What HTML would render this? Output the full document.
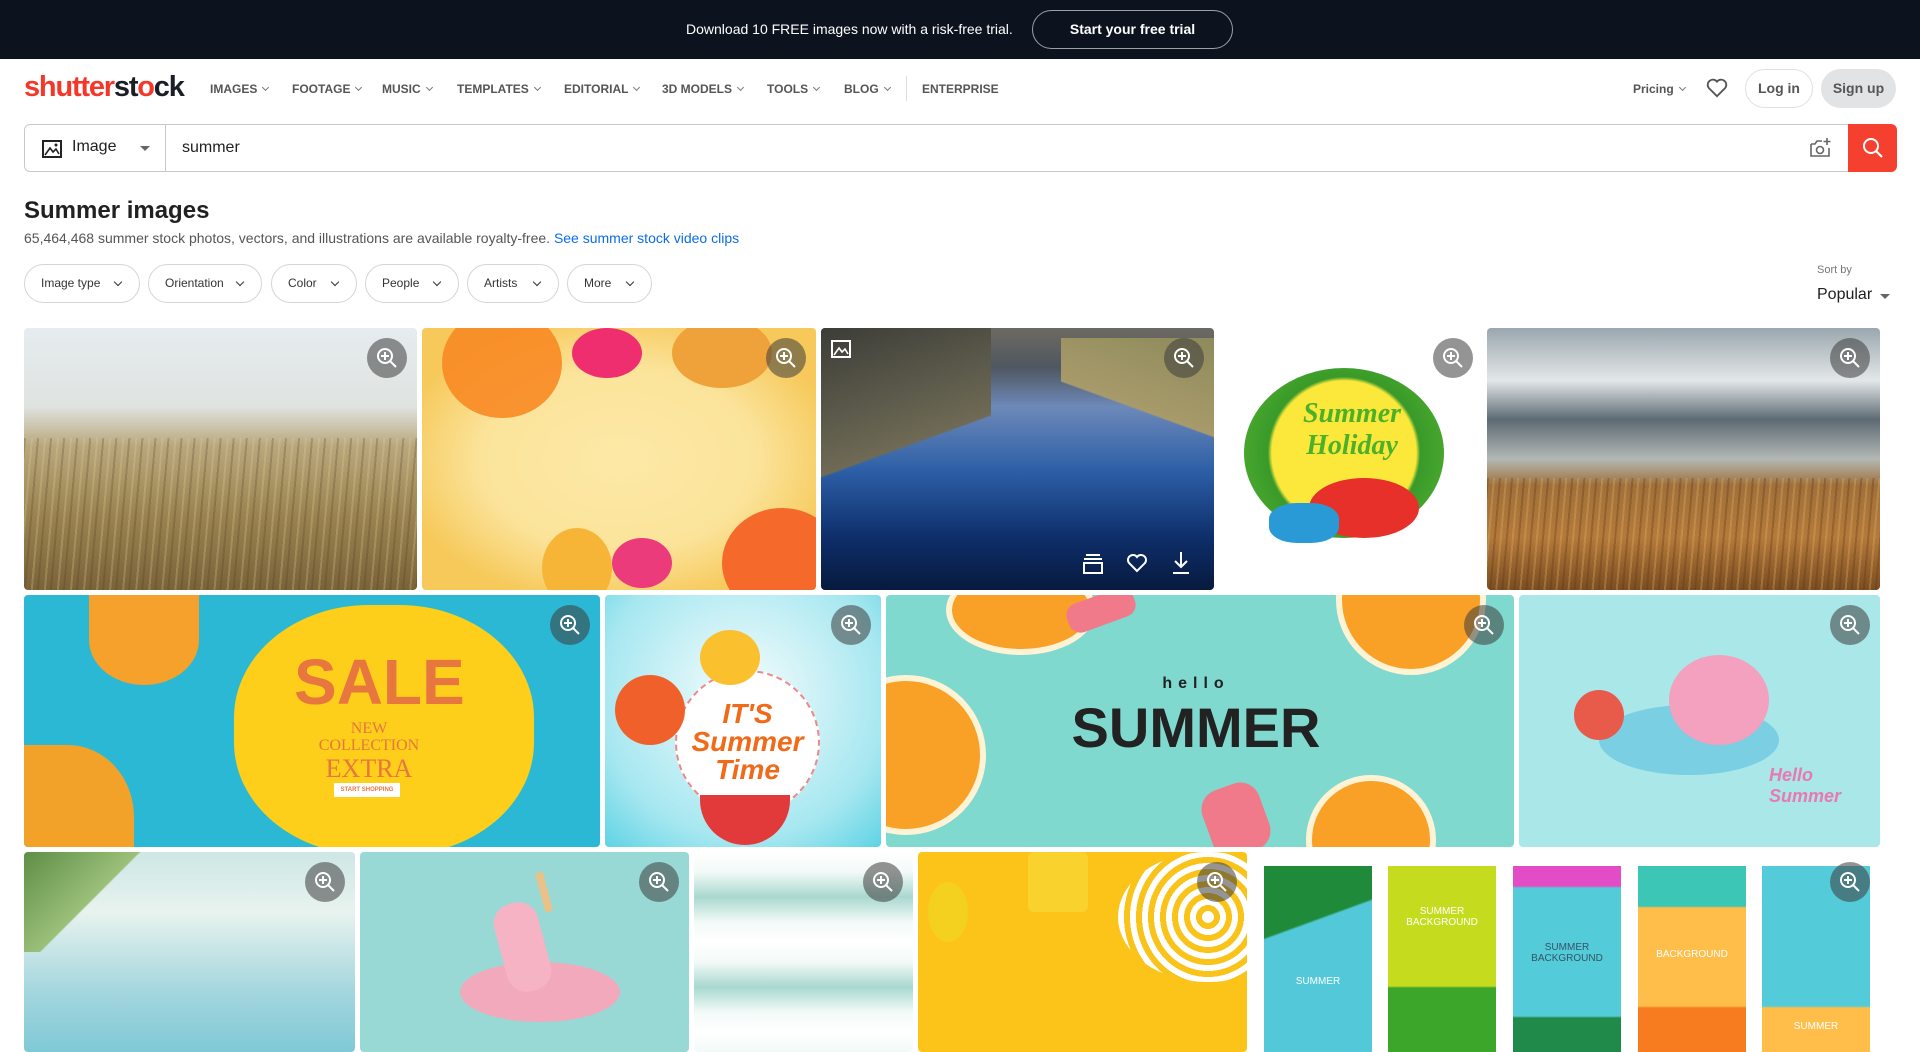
<!DOCTYPE html>
<html><head><meta charset="utf-8"><style>
*{box-sizing:border-box;margin:0;padding:0}
body{width:1920px;height:1040px;overflow:hidden;background:#fff;font-family:"Liberation Sans",sans-serif;color:#212121;position:relative}
.abs{position:absolute}
.top{left:0;top:0;width:1920px;height:59px;background:#0d131e}
.top .t{left:686px;top:21px;color:#fff;font-size:14px}
.top .b{left:1032px;top:10px;width:201px;height:39px;border:1px solid #9aa0a8;border-radius:20px;color:#fff;font-weight:bold;font-size:14px;text-align:center;line-height:37px}
.nav{font-size:12px;font-weight:bold;color:#555;top:82px}
.chev{display:inline-block;width:5px;height:5px;border-right:1.3px solid #777;border-bottom:1.3px solid #777;transform:rotate(45deg);margin-left:6px;position:relative;top:-3px}
.logo{left:24px;top:71px;font-size:29px;font-weight:bold;color:#f5372a;letter-spacing:-1.2px}
.search{left:24px;top:124px;width:1872px;height:48px;border:1px solid #c8c8c8;border-radius:6px}
.img{position:absolute;border-radius:4px;overflow:hidden}
.zm{position:absolute;top:10px;right:10px;width:40px;height:40px;border-radius:50%;background:rgba(60,60,60,.55)}
.zm svg{position:absolute;left:9px;top:9px}
.pill{position:absolute;top:264px;height:39px;border:1px solid #d5d5d5;border-radius:20px;font-size:12px;color:#333;line-height:37px;padding-left:16px}
.pill .chev{position:absolute;right:18px;top:14px;border-color:#333;width:6px;height:6px;border-width:0 1.6px 1.6px 0}
</style></head><body>
<div class="abs top"><div class="abs t">Download 10 FREE images now with a risk-free trial.</div><div class="abs b">Start your free trial</div></div>

<div class="abs logo">shutter<span style="color:#1b1e24">st</span>o<span style="color:#1b1e24">ck</span></div>
<div class="abs nav" style="left:210px">IMAGES<span class="chev"></span></div>
<div class="abs nav" style="left:292px">FOOTAGE<span class="chev"></span></div>
<div class="abs nav" style="left:382px">MUSIC<span class="chev"></span></div>
<div class="abs nav" style="left:457px">TEMPLATES<span class="chev"></span></div>
<div class="abs nav" style="left:564px">EDITORIAL<span class="chev"></span></div>
<div class="abs nav" style="left:662px">3D MODELS<span class="chev"></span></div>
<div class="abs nav" style="left:767px">TOOLS<span class="chev"></span></div>
<div class="abs nav" style="left:844px">BLOG<span class="chev"></span></div>
<div class="abs" style="left:906px;top:76px;width:1px;height:25px;background:#ddd"></div>
<div class="abs nav" style="left:922px">ENTERPRISE</div>
<div class="abs nav" style="left:1633px">Pricing<span class="chev"></span></div>
<svg class="abs" style="left:1706px;top:78px" width="22" height="20" viewBox="0 0 24 22"><path d="M12 20 L3 11 A5 5 0 0 1 12 4 A5 5 0 0 1 21 11 Z" fill="none" stroke="#555" stroke-width="2"/></svg>
<div class="abs" style="left:1745px;top:69px;width:68px;height:39px;border:1px solid #e0e0e0;border-radius:20px;font-size:14px;font-weight:bold;color:#555;text-align:center;line-height:37px">Log in</div>
<div class="abs" style="left:1821px;top:69px;width:75px;height:39px;background:#e2e3e5;border-radius:20px;font-size:14px;font-weight:bold;color:#555;text-align:center;line-height:39px">Sign up</div>

<div class="abs search">
 <svg class="abs" style="left:17px;top:15px" width="20" height="18" viewBox="0 0 20 18"><rect x="1" y="1" width="18" height="16" fill="none" stroke="#222" stroke-width="2"/><path d="M3 15 L8 8 L11 12 L14 9 L17 14" fill="none" stroke="#222" stroke-width="1.6"/><circle cx="14" cy="5" r="1.5" fill="#222"/></svg>
 <div class="abs" style="left:47px;top:13px;font-size:16px">Image</div>
 <div class="abs" style="left:115px;top:21px;border-left:5px solid transparent;border-right:5px solid transparent;border-top:5px solid #666"></div>
 <div class="abs" style="left:140px;top:-1px;width:1px;height:48px;background:#c8c8c8"></div>
 <div class="abs" style="left:157px;top:14px;font-size:16px">summer</div>
 <svg class="abs" style="left:1784px;top:12px" width="22" height="22" viewBox="0 0 22 22"><path d="M2 7 H6 L8 4 H13 M2 7 V19 H20 V11" fill="none" stroke="#666" stroke-width="1.6"/><circle cx="11" cy="13" r="3.5" fill="none" stroke="#666" stroke-width="1.6"/><path d="M18 1 V8 M14.5 4.5 H21.5" stroke="#666" stroke-width="1.6"/></svg>
 <div class="abs" style="left:1823px;top:-1px;width:49px;height:48px;background:#f5402f;border-radius:0 6px 6px 0"><svg style="position:absolute;left:14px;top:13px" width="22" height="22" viewBox="0 0 22 22"><circle cx="9" cy="9" r="7" fill="none" stroke="#fff" stroke-width="2"/><path d="M14 14 L20 20" stroke="#fff" stroke-width="2.2"/></svg></div>
</div>

<div class="abs" style="left:24px;top:197px;font-size:24px;font-weight:bold">Summer images</div>
<div class="abs" style="left:24px;top:230px;font-size:14px;color:#555">65,464,468 summer stock photos, vectors, and illustrations are available royalty-free. <span style="color:#0b6ce8">See summer stock video clips</span></div>

<div class="pill" style="left:24px;width:116px">Image type<span class="chev"></span></div>
<div class="pill" style="left:148px;width:114px">Orientation<span class="chev"></span></div>
<div class="pill" style="left:271px;width:86px">Color<span class="chev"></span></div>
<div class="pill" style="left:365px;width:94px">People<span class="chev"></span></div>
<div class="pill" style="left:467px;width:92px">Artists<span class="chev"></span></div>
<div class="pill" style="left:567px;width:85px">More<span class="chev"></span></div>
<div class="abs" style="left:1817px;top:264px;font-size:11px;color:#777">Sort by</div>
<div class="abs" style="left:1817px;top:286px;font-size:16px">Popular</div>
<div class="abs" style="left:1880px;top:294px;border-left:5px solid transparent;border-right:5px solid transparent;border-top:5px solid #666"></div>

<!-- row 1 -->
<div class="img" style="left:24px;top:328px;width:393px;height:262px;background:linear-gradient(180deg,#e6ecef 0%,#dfe3e0 30%,#b9a77c 45%,#9c8552 70%,#7a6339 100%)"><div class="abs" style="left:0;top:110px;width:393px;height:152px;background:repeating-linear-gradient(95deg,rgba(80,60,30,.25) 0 2px,transparent 2px 7px,rgba(230,210,160,.25) 7px 9px,transparent 9px 13px)"></div><div class="zm"><svg width="22" height="22" viewBox="0 0 22 22"><circle cx="9" cy="9" r="7" fill="none" stroke="#fff" stroke-width="2"/><path d="M14 14L20 20M9 5V13M5 9H13" stroke="#fff" stroke-width="2"/></svg></div></div>
<div class="img" style="left:422px;top:328px;width:394px;height:262px;background:radial-gradient(ellipse at 50% 50%,#fde9a6 0%,#fbe39a 50%,#f6c95a 80%),#fbe39a">
 <div class="abs" style="left:20px;top:-20px;width:120px;height:110px;border-radius:50%;background:#f88a24;opacity:.9"></div>
 <div class="abs" style="left:250px;top:-10px;width:100px;height:70px;border-radius:50%;background:#f0a23a"></div>
 <div class="abs" style="left:300px;top:180px;width:120px;height:110px;border-radius:50%;background:#f56a2a"></div>
 <div class="abs" style="left:120px;top:200px;width:70px;height:80px;border-radius:50%;background:#f6b536"></div>
 <div class="abs" style="left:190px;top:210px;width:60px;height:50px;border-radius:50%;background:#ec3b7a"></div>
 <div class="abs" style="left:150px;top:0px;width:70px;height:50px;border-radius:50%;background:#ef2e6f"></div>
 <div class="zm"><svg width="22" height="22" viewBox="0 0 22 22"><circle cx="9" cy="9" r="7" fill="none" stroke="#fff" stroke-width="2"/><path d="M14 14L20 20M9 5V13M5 9H13" stroke="#fff" stroke-width="2"/></svg></div></div>
<div class="img" style="left:821px;top:328px;width:393px;height:262px;background:linear-gradient(180deg,#6d6a62 0%,#4f5760 15%,#6d89b9 30%,#2c5ea6 55%,#0e2e6a 80%,#071a3e 100%)">
 <div class="abs" style="left:0;top:0;width:170px;height:150px;background:linear-gradient(160deg,#3c3d38,#6e6a55 70%,transparent 71%)"></div>
 <div class="abs" style="left:240px;top:10px;width:160px;height:110px;background:linear-gradient(200deg,#8c8a5b,#a89a6a 60%,transparent 61%)"></div>
 <svg class="abs" style="left:10px;top:12px" width="20" height="18" viewBox="0 0 20 18"><rect x="1" y="1" width="18" height="16" fill="none" stroke="#fff" stroke-width="2"/><path d="M3 15 L8 8 L11 12 L14 9 L17 14" fill="none" stroke="#fff" stroke-width="1.6"/></svg>
 <div class="zm"><svg width="22" height="22" viewBox="0 0 22 22"><circle cx="9" cy="9" r="7" fill="none" stroke="#fff" stroke-width="2"/><path d="M14 14L20 20M9 5V13M5 9H13" stroke="#fff" stroke-width="2"/></svg></div>
 <svg class="abs" style="left:262px;top:222px" width="120" height="26" viewBox="0 0 120 26"><path d="M3 5H17M1 9H19M1 13H19V23H1Z" fill="none" stroke="#fff" stroke-width="2"/><path d="M54 21 L46 13 A4.5 4.5 0 0 1 54 7 A4.5 4.5 0 0 1 62 13 Z" fill="none" stroke="#fff" stroke-width="2"/><path d="M98 2V17M92 11L98 17L104 11M90 23H106" fill="none" stroke="#fff" stroke-width="2"/></svg>
</div>
<div class="img" style="left:1219px;top:328px;width:264px;height:262px;background:#fff">
 <div class="abs" style="left:25px;top:40px;width:200px;height:170px;border-radius:50%;background:radial-gradient(circle,#fbe83a 55%,#3a9a2a 58%,#55b52f 100%)"></div>
 <div class="abs" style="left:58px;top:70px;width:150px;font-family:'Liberation Serif',serif;font-style:italic;font-weight:bold;color:#4cb02a;font-size:28px;text-align:center;line-height:32px">Summer Holiday</div>
 <div class="abs" style="left:90px;top:150px;width:110px;height:60px;border-radius:50%;background:#e8302a"></div>
 <div class="abs" style="left:50px;top:175px;width:70px;height:40px;border-radius:40%;background:#2a9ad6"></div>
 <div class="zm"><svg width="22" height="22" viewBox="0 0 22 22"><circle cx="9" cy="9" r="7" fill="none" stroke="#fff" stroke-width="2"/><path d="M14 14L20 20M9 5V13M5 9H13" stroke="#fff" stroke-width="2"/></svg></div></div>
<div class="img" style="left:1487px;top:328px;width:393px;height:262px;background:linear-gradient(180deg,#9aa7ae 0%,#e3e7e8 20%,#5d6a73 35%,#b3b8b5 50%,#a0703a 60%,#b47a3a 80%,#7a4d22 100%)"><div class="abs" style="left:0;top:150px;width:393px;height:112px;background:repeating-linear-gradient(95deg,rgba(90,50,20,.3) 0 2px,transparent 2px 6px,rgba(230,180,110,.3) 6px 8px,transparent 8px 12px)"></div><div class="zm"><svg width="22" height="22" viewBox="0 0 22 22"><circle cx="9" cy="9" r="7" fill="none" stroke="#fff" stroke-width="2"/><path d="M14 14L20 20M9 5V13M5 9H13" stroke="#fff" stroke-width="2"/></svg></div></div>

<!-- row 2 -->
<div class="img" style="left:24px;top:595px;width:576px;height:252px;background:#2bb8d4">
 <div class="abs" style="left:210px;top:10px;width:300px;height:250px;border-radius:45%;background:#fdce1a"></div>
 <div class="abs" style="left:0;top:150px;width:110px;height:120px;background:#f3a229;border-radius:0 60% 0 0"></div>
 <div class="abs" style="left:65px;top:0;width:110px;height:90px;background:#f5a12b;border-radius:0 0 50% 50%"></div>
 <div class="abs" style="left:270px;top:50px;width:150px;font-size:64px;font-weight:bold;color:#e8763f;text-align:center">SALE</div>
 <div class="abs" style="left:270px;top:125px;width:150px;font-family:'Liberation Serif',serif;color:#e8763f;font-size:16px;text-align:center;line-height:17px">NEW<br>COLLECTION<br><span style="font-size:26px;line-height:30px">EXTRA</span><br>20% OFF</div>
 <div class="abs" style="left:310px;top:188px;width:66px;height:14px;background:#fff;font-size:6px;color:#e8763f;text-align:center;line-height:14px;font-weight:bold">START SHOPPING</div>
 <div class="zm"><svg width="22" height="22" viewBox="0 0 22 22"><circle cx="9" cy="9" r="7" fill="none" stroke="#fff" stroke-width="2"/><path d="M14 14L20 20M9 5V13M5 9H13" stroke="#fff" stroke-width="2"/></svg></div></div>
<div class="img" style="left:605px;top:595px;width:276px;height:252px;background:radial-gradient(circle at 50% 40%,#f6fdfd,#a6e7f0 70%,#5fd3e4)">
 <div class="abs" style="left:70px;top:75px;width:145px;height:145px;border-radius:50%;background:#fff;border:2px dashed #e88"></div>
 <div class="abs" style="left:70px;top:105px;width:145px;text-align:center;color:#f06a1a;font-weight:bold;font-style:italic;font-size:28px;line-height:28px">IT'S<br>Summer<br>Time</div>
 <div class="abs" style="left:95px;top:200px;width:90px;height:50px;border-radius:0 0 50px 50px;background:#e23a3a"></div>
 <div class="abs" style="left:10px;top:80px;width:70px;height:70px;border-radius:50%;background:#f0602a"></div>
 <div class="abs" style="left:95px;top:35px;width:60px;height:55px;border-radius:50%;background:#fbc02d"></div>
 <div class="zm"><svg width="22" height="22" viewBox="0 0 22 22"><circle cx="9" cy="9" r="7" fill="none" stroke="#fff" stroke-width="2"/><path d="M14 14L20 20M9 5V13M5 9H13" stroke="#fff" stroke-width="2"/></svg></div></div>
<div class="img" style="left:886px;top:595px;width:628px;height:252px;background:#7fd9cf">
 <div class="abs" style="left:-60px;top:80px;width:160px;height:160px;border-radius:50%;background:#f9a126;border:6px solid #fff3d6"></div>
 <div class="abs" style="left:450px;top:-70px;width:150px;height:150px;border-radius:50%;background:#f9a126;border:6px solid #fff3d6"></div>
 <div class="abs" style="left:420px;top:180px;width:130px;height:130px;border-radius:50%;background:#f9a126;border:6px solid #fff3d6"></div>
 <div class="abs" style="left:60px;top:-30px;width:150px;height:90px;border-radius:50%;background:#f9a126;border:6px solid #fff3d6"></div>
 <div class="abs" style="left:320px;top:190px;width:60px;height:70px;border-radius:20px;background:#f07a8a;transform:rotate(-20deg)"></div>
 <div class="abs" style="left:180px;top:0;width:70px;height:30px;border-radius:12px;background:#f07a8a;transform:rotate(-20deg)"></div>
 <div class="abs" style="left:180px;top:80px;width:260px;text-align:center;font-size:16px;letter-spacing:6px;color:#222;font-weight:bold">hello</div>
 <div class="abs" style="left:180px;top:100px;width:260px;text-align:center;font-size:56px;color:#222;font-weight:bold">SUMMER</div>
 <div class="zm"><svg width="22" height="22" viewBox="0 0 22 22"><circle cx="9" cy="9" r="7" fill="none" stroke="#fff" stroke-width="2"/><path d="M14 14L20 20M9 5V13M5 9H13" stroke="#fff" stroke-width="2"/></svg></div></div>
<div class="img" style="left:1519px;top:595px;width:361px;height:252px;background:#a9e7e9">
 <div class="abs" style="left:80px;top:110px;width:180px;height:70px;border-radius:50%;background:#6ec9e0;opacity:.8"></div>
 <div class="abs" style="left:150px;top:60px;width:100px;height:90px;border-radius:50%;background:#f4a0bf"></div>
 <div class="abs" style="left:55px;top:95px;width:50px;height:50px;border-radius:50%;background:#e85a4a"></div>
 <div class="abs" style="left:250px;top:170px;font-style:italic;color:#e87ab0;font-size:18px;font-weight:bold">Hello<br>Summer</div>
 <div class="zm"><svg width="22" height="22" viewBox="0 0 22 22"><circle cx="9" cy="9" r="7" fill="none" stroke="#fff" stroke-width="2"/><path d="M14 14L20 20M9 5V13M5 9H13" stroke="#fff" stroke-width="2"/></svg></div></div>

<!-- row 3 -->
<div class="img" style="left:24px;top:852px;width:331px;height:200px;background:linear-gradient(180deg,#cde7e4 0%,#e8f3ef 30%,#a4d6de 70%,#7fc9d6 100%)">
 <div class="abs" style="left:0;top:0;width:130px;height:100px;background:linear-gradient(135deg,#5e8e46,#9bc07a 50%,transparent 51%)"></div>
 <div class="zm"><svg width="22" height="22" viewBox="0 0 22 22"><circle cx="9" cy="9" r="7" fill="none" stroke="#fff" stroke-width="2"/><path d="M14 14L20 20M9 5V13M5 9H13" stroke="#fff" stroke-width="2"/></svg></div></div>
<div class="img" style="left:360px;top:852px;width:329px;height:200px;background:#98d9d6">
 <div class="abs" style="left:100px;top:110px;width:160px;height:60px;border-radius:50%;background:#f2a9bb"></div>
 <div class="abs" style="left:140px;top:50px;width:45px;height:90px;border-radius:20px;background:#f6b3c3;transform:rotate(-15deg)"></div>
 <div class="abs" style="left:180px;top:20px;width:8px;height:40px;background:#e9c28a;transform:rotate(-15deg)"></div>
 <div class="zm"><svg width="22" height="22" viewBox="0 0 22 22"><circle cx="9" cy="9" r="7" fill="none" stroke="#fff" stroke-width="2"/><path d="M14 14L20 20M9 5V13M5 9H13" stroke="#fff" stroke-width="2"/></svg></div></div>
<div class="img" style="left:694px;top:852px;width:219px;height:200px;background:repeating-linear-gradient(180deg,#fff 0px,#f2faf8 20px,#a9d8cf 45px,#f2faf8 70px,#fff 90px)"><div class="zm"><svg width="22" height="22" viewBox="0 0 22 22"><circle cx="9" cy="9" r="7" fill="none" stroke="#fff" stroke-width="2"/><path d="M14 14L20 20M9 5V13M5 9H13" stroke="#fff" stroke-width="2"/></svg></div></div>
<div class="img" style="left:918px;top:852px;width:329px;height:200px;background:#fcc419">
 <div class="abs" style="left:200px;top:0;width:180px;height:130px;border-radius:50%;background:repeating-radial-gradient(circle,#fff 0 6px,#f9c31a 6px 12px)"></div>
 <div class="abs" style="left:110px;top:0;width:60px;height:60px;background:#f9d22e;border-radius:6px"></div>
 <div class="abs" style="left:10px;top:30px;width:40px;height:60px;border-radius:50%;background:#f4d01f"></div>
 <div class="zm"><svg width="22" height="22" viewBox="0 0 22 22"><circle cx="9" cy="9" r="7" fill="none" stroke="#fff" stroke-width="2"/><path d="M14 14L20 20M9 5V13M5 9H13" stroke="#fff" stroke-width="2"/></svg></div></div>
<div class="img" style="left:1252px;top:852px;width:628px;height:200px;background:#fff">
 <div class="abs" style="left:12px;top:14px;width:108px;height:200px;background:linear-gradient(160deg,#1f8a3a 0 30%,#52c8d8 31%)"><div style="position:absolute;top:110px;width:100%;text-align:center;color:#fff;font-size:10px">SUMMER</div></div>
 <div class="abs" style="left:136px;top:14px;width:108px;height:200px;background:linear-gradient(180deg,#c4dc1d 0 60%,#3ba62a 61%)"><div style="position:absolute;top:40px;width:100%;text-align:center;color:#fff;font-size:10px">SUMMER<br>BACKGROUND</div></div>
 <div class="abs" style="left:261px;top:14px;width:108px;height:200px;background:linear-gradient(180deg,#e24dc7 0 10%,#54cbd8 11% 75%,#1f8a4a 76%)"><div style="position:absolute;top:76px;width:100%;text-align:center;color:#356;font-size:10px">SUMMER<br>BACKGROUND</div></div>
 <div class="abs" style="left:386px;top:14px;width:108px;height:200px;background:linear-gradient(180deg,#3cc6b5 0 20%,#ffbe4a 21% 70%,#f77b1f 71%)"><div style="position:absolute;top:83px;width:100%;text-align:center;color:#fff;font-size:10px">BACKGROUND</div></div>
 <div class="abs" style="left:510px;top:14px;width:108px;height:200px;background:linear-gradient(180deg,#54cbd8 0 70%,#ffbe4a 71%)"><div style="position:absolute;top:155px;width:100%;text-align:center;color:#fff;font-size:10px">SUMMER</div></div>
 <div class="zm"><svg width="22" height="22" viewBox="0 0 22 22"><circle cx="9" cy="9" r="7" fill="none" stroke="#fff" stroke-width="2"/><path d="M14 14L20 20M9 5V13M5 9H13" stroke="#fff" stroke-width="2"/></svg></div></div>
</body></html>
